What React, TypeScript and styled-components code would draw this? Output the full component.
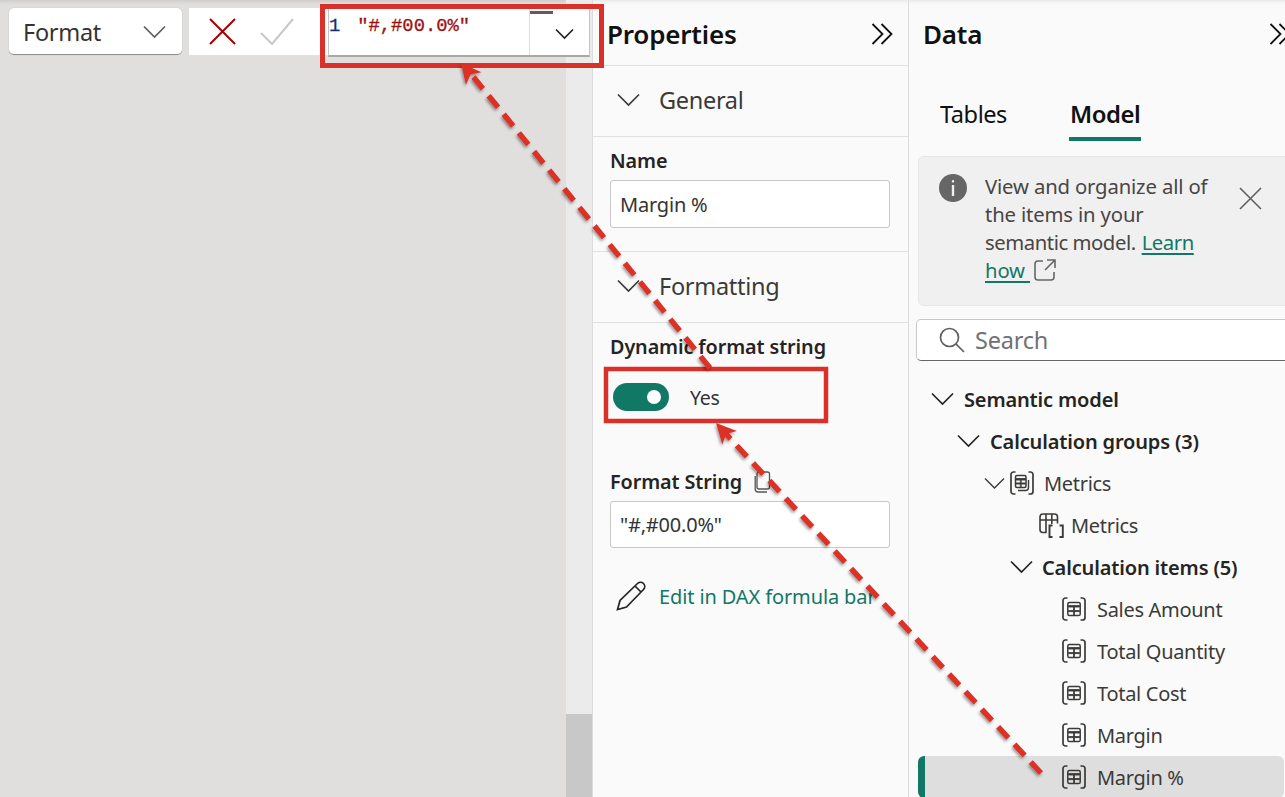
import React from "react";
import styled, { createGlobalStyle } from "styled-components";

const Global = createGlobalStyle`
  html, body { margin: 0; padding: 0; height: 797px; overflow: hidden; background: #fafafa; }
  body { font-family: "Noto Sans", "Open Sans", Arial, sans-serif; }
  * { box-sizing: border-box; }
`;

const TEAL = "#117865";

const Page = styled.div`
  position: relative;
  width: 1285px;
  height: 797px;
  display: flex;
  overflow: hidden;
  color: #252423;
`;

/* ---------- left canvas ---------- */
const LeftArea = styled.div`
  width: 592px;
  flex: none;
  display: grid;
  grid-template-columns: 566px 26px;
  grid-template-rows: 1fr;
`;
const Canvas = styled.div`
  grid-column: 1;
  grid-row: 1;
  background: #e0dfdd;
  box-shadow: inset 0 5px 4px -4px rgba(0, 0, 0, 0.12);
`;
const ScrollTrack = styled.div`
  grid-column: 2;
  grid-row: 1;
  background: #ebebeb;
  display: flex;
  flex-direction: column;
  justify-content: flex-end;
`;
const ScrollThumb = styled.div`
  height: 83px;
  background: #c8c8c8;
`;
const FormulaBar = styled.div`
  grid-column: 1 / 3;
  grid-row: 1;
  align-self: start;
  display: flex;
  align-items: flex-start;
  padding: 8px 2px 0 9px;
  z-index: 1;
`;
const MeasureSelect = styled.div`
  width: 173px;
  height: 47px;
  background: #fff;
  border-radius: 5px;
  border-bottom: 1px solid #8f8f8f;
  box-shadow: 0 0 1px rgba(0, 0, 0, 0.25);
  display: flex;
  align-items: center;
  justify-content: space-between;
  padding: 2px 16px 0 14px;
  font-size: 23.5px;
  letter-spacing: -0.3px;
  color: #333;
`;
const CommitBox = styled.div`
  width: 139px;
  height: 47px;
  margin-left: 7px;
  background: #fff;
  display: flex;
  align-items: center;
  gap: 24px;
  padding-left: 20px;
`;
const Editor = styled.div`
  flex: 1;
  height: 49px;
  background: #fff;
  border-left: 1px solid #c4c4c4;
  border-right: 1px solid #c4c4c4;
  border-bottom: 2px solid #a8a8a8;
  display: flex;
`;
const CodeLine = styled.div`
  flex: 1;
  display: flex;
  gap: 17px;
  padding: 6px 0 0 0;
  font-family: "Liberation Mono", monospace;
  font-size: 18.8px;
  line-height: 24px;
  -webkit-text-stroke: 0.3px currentColor;
`;
const LineNumber = styled.span`
  color: #14306f;
`;
const CodeString = styled.span`
  color: #9c1212;
`;
const EditorToggle = styled.div`
  width: 60px;
  border-left: 1px solid #dcdcdc;
  display: flex;
  flex-direction: column;
  align-items: flex-start;
`;
const Grip = styled.div`
  width: 23px;
  height: 3px;
  margin-top: 3px;
  background: #605e5c;
`;
const ToggleChevron = styled.div`
  margin: 14px 0 0 25px;
  display: flex;
`;

/* ---------- panels ---------- */
const PropertiesPanel = styled.aside`
  width: 317px;
  flex: none;
  background: #fafafa;
  border-left: 1px solid #dcdcdc;
  border-right: 1px solid #dcdcdc;
  box-shadow: inset 0 5px 4px -4px rgba(0, 0, 0, 0.1);
  display: flex;
  flex-direction: column;
`;
const DataPanel = styled.aside`
  flex: 1;
  min-width: 0;
  background: #fafafa;
  box-shadow: inset 0 5px 4px -4px rgba(0, 0, 0, 0.1);
  display: flex;
  flex-direction: column;
  overflow: hidden;
`;
const PanelHeader = styled.header<{ $left: number; $border?: boolean }>`
  height: 66px;
  flex: none;
  display: flex;
  align-items: center;
  justify-content: space-between;
  padding: 2px 13px 0 ${(p) => p.$left}px;
  border-bottom: ${(p) => (p.$border ? "1px solid #e1e1e1" : "none")};
`;
const PanelTitle = styled.h2`
  margin: 0;
  font-size: 26px;
  font-weight: 600;
  letter-spacing: -0.2px;
  color: #111;
`;
const CollapseData = styled.span`
  margin-right: -21px;
  display: flex;
`;
const SectionHead = styled.div`
  height: 71px;
  flex: none;
  display: flex;
  align-items: center;
  gap: 19px;
  padding: 0 0 2px 24px;
  border-bottom: 1px solid #e1e1e1;
  font-size: 23.5px;
  letter-spacing: -0.3px;
  color: #3b3a39;
`;
const SectionBody = styled.div<{ $height: number; $border?: boolean }>`
  height: ${(p) => p.$height}px;
  flex: none;
  padding: 12px 18px 0 17px;
  display: flex;
  flex-direction: column;
  border-bottom: ${(p) => (p.$border ? "1px solid #e1e1e1" : "none")};
`;
const FieldLabel = styled.div`
  font-size: 19.8px;
  font-weight: 600;
  line-height: 24px;
  letter-spacing: -0.1px;
  color: #252423;
  display: flex;
  align-items: center;
  gap: 11px;
`;
const TextInput = styled.div<{ $height: number }>`
  height: ${(p) => p.$height}px;
  margin-top: 7px;
  background: #fff;
  border: 1px solid #c8c8c8;
  border-radius: 3px;
  display: flex;
  align-items: center;
  padding: ${(p) => (p.$height % 2 === 0 ? 1 : 0)}px 0 0 9px;
  font-size: 20px;
  letter-spacing: -0.2px;
  color: #333;
`;
const ToggleRow = styled.div`
  display: flex;
  align-items: center;
  gap: 21px;
  margin: 24px 0 0 3px;
  font-size: 19.5px;
  letter-spacing: -0.3px;
  color: #333;
`;
const Toggle = styled.div`
  width: 56px;
  height: 28px;
  border-radius: 14px;
  background: ${TEAL};
  display: flex;
  align-items: center;
  justify-content: flex-end;
  padding-right: 8px;
`;
const Knob = styled.div`
  width: 14px;
  height: 14px;
  border-radius: 50%;
  background: #fff;
`;
const LabelSpaced = styled(FieldLabel)`
  margin-top: 59px;
`;
const EditRow = styled.div`
  display: flex;
  align-items: center;
  gap: 13px;
  margin: 33px 0 0 6px;
  width: 266px;
  overflow: hidden;
  white-space: nowrap;
  font-size: 20px;
  letter-spacing: -0.12px;
  color: ${TEAL};
`;

/* ---------- data panel ---------- */
const Tabs = styled.div`
  height: 75px;
  flex: none;
  display: flex;
  gap: 62px;
  padding: 28px 0 0 31px;
`;
const Tab = styled.div<{ $active?: boolean }>`
  height: 47px;
  font-size: ${(p) => (p.$active ? 23.9 : 23.6)}px;
  line-height: 40px;
  letter-spacing: -0.45px;
  padding: 0 ${(p) => (p.$active ? 1 : 0)}px;
  font-weight: ${(p) => (p.$active ? 600 : 400)};
  color: #111;
  border-bottom: ${(p) => (p.$active ? `4px solid ${TEAL}` : "none")};
`;
const InfoBox = styled.div`
  height: 150px;
  margin: 15px -20px 0 9px;
  flex: none;
  background: #f0f0f0;
  border: 1px solid #e6e6e6;
  border-radius: 6px;
  display: flex;
  padding: 15px 0 0 20px;
  color: #484644;
`;
const InfoIcon = styled.div`
  width: 28px;
  height: 28px;
  margin-top: 2px;
  flex: none;
  border-radius: 50%;
  background: #666;
  color: #f0f0f0;
  display: flex;
  align-items: center;
  justify-content: center;
`;
const InfoText = styled.div`
  width: 236px;
  margin-left: 18px;
  font-size: 20.3px;
  line-height: 28px;
  letter-spacing: -0.15px;
  flex: none;
`;
const InfoLine = styled.div<{ $tight?: boolean }>`
  white-space: nowrap;
  height: 28px;
  display: flex;
  align-items: center;
  gap: 6px;
  letter-spacing: ${(p) => (p.$tight ? "-0.45px" : "inherit")};
`;
const InfoLink = styled.span`
  color: ${TEAL};
  text-decoration: underline;
  text-underline-offset: 3px;
`;
const HowLink = styled(InfoLink)`
  white-space: pre;
`;
const LinkIcon = styled.span`
  display: inline-flex;
  margin-left: -2px;
`;
const InfoClose = styled.div`
  margin: 15px 0 0 18px;
  display: flex;
  flex: none;
`;
const SearchBox = styled.div`
  height: 42px;
  margin: 13px -20px 0 7px;
  flex: none;
  background: #fff;
  border: 1px solid #c8c8c8;
  border-bottom-color: #666;
  border-radius: 5px;
  display: flex;
  align-items: center;
  gap: 10px;
  padding-left: 22px;
  font-size: 23.5px;
  letter-spacing: -0.2px;
  color: #717171;
`;
const Tree = styled.div`
  margin-top: 17px;
  display: flex;
  flex-direction: column;
`;
const Row = styled.div<{ $indent: number; $bold?: boolean; $selected?: boolean }>`
  height: 42px;
  margin: 0 1px 0 9px;
  padding-left: ${(p) => p.$indent}px;
  display: flex;
  align-items: center;
  flex: none;
  white-space: nowrap;
  font-size: 20px;
  letter-spacing: ${(p) => (p.$bold ? "-0.15px" : "-0.3px")};
  font-weight: ${(p) => (p.$bold ? 600 : 400)};
  color: ${(p) => (p.$bold ? "#252423" : "#3b3a39")};
  background: ${(p) => (p.$selected ? "#dedede" : "transparent")};
  border-radius: ${(p) => (p.$selected ? "6px" : "0")};
  border-left: ${(p) => (p.$selected ? `7px solid ${TEAL}` : "none")};
`;
const Slot = styled.span<{ $w: number }>`
  width: ${(p) => p.$w}px;
  flex: none;
  display: flex;
  align-items: center;
`;

/* ---------- overlay ---------- */
const Annotations = styled.svg`
  position: absolute;
  inset: 0;
  width: 1285px;
  height: 797px;
  pointer-events: none;
  z-index: 5;
`;

/* ---------- icons ---------- */
const Chevron = ({ w = 22, color = "#3b3a39", sw = 1.7 }: { w?: number; color?: string; sw?: number }) => (
  <svg width={w} height={w / 2 + 2} viewBox={`0 0 ${w} ${w / 2 + 2}`} fill="none">
    <path d={`M1 1.5 L${w / 2} ${w / 2 + 0.5} L${w - 1} 1.5`} stroke={color} strokeWidth={sw} />
  </svg>
);
const DoubleChevron = () => (
  <svg width="24" height="24" viewBox="0 0 24 24" fill="none" stroke="#111" strokeWidth="1.8">
    <path d="M1.5 2 L11.5 12 L1.5 22" />
    <path d="M10.5 2 L20.5 12 L10.5 22" />
  </svg>
);
const CalcIcon = ({ shadow }: { shadow?: boolean }) => (
  <svg width="24" height="24" viewBox="0 0 24 24" fill="none" stroke="#3b3a39" strokeWidth="1.7">
    <path d="M5.5 1 H3.5 A2.5 2.5 0 0 0 1 3.5 V20.5 A2.5 2.5 0 0 0 3.5 23 H5.5" />
    <path d="M18.5 1 H20.5 A2.5 2.5 0 0 1 23 3.5 V20.5 A2.5 2.5 0 0 1 20.5 23 H18.5" />
    {shadow ? (
      <>
        <rect x="5.5" y="4.5" width="10.5" height="12" rx="1.5" strokeWidth="1.5" />
        <path d="M6 7.5 H15.5 V9 H6 Z M6 12 H15.5 V13 H6 Z M10.3 8 V16 M11.2 8 V16" fill="#3b3a39" strokeWidth="0.9" />
        <path d="M18.5 9 V16.5 A3 3 0 0 1 15.5 19.5 H8" strokeWidth="1.4" />
      </>
    ) : (
      <>
        <rect x="5.8" y="5.5" width="12.4" height="13" rx="1.6" strokeWidth="1.5" />
        <path d="M6.5 8.6 H17.5 V10 H6.5 Z M6.5 13.6 H17.5 V14.6 H6.5 Z M11.5 10 V18 M12.5 10 V18" fill="#3b3a39" strokeWidth="0.9" />
      </>
    )}
  </svg>
);
const TableBraceIcon = () => (
  <svg width="25" height="25" viewBox="0 0 25 25" fill="none" stroke="#3b3a39" strokeWidth="1.6">
    <path d="M7.5 19.5 H4 A3 3 0 0 1 1 16.5 V4 A3 3 0 0 1 4 1 H15.5 A3 3 0 0 1 18.5 4 V10.5" />
    <path d="M1 7 H18.5 M7 1 V19.5 M12.8 1 V11" />
    <path d="M13.5 12.5 H10.5 V24 H13.5 M20.5 12.5 H23.8 V24 H20.5" strokeWidth="1.9" />
  </svg>
);

const leaves = ["Sales Amount", "Total Quantity", "Total Cost", "Margin"];

const Head = ({ x1, y1, x2, y2 }: { x1: number; y1: number; x2: number; y2: number }) => {
  const a = Math.atan2(y2 - y1, x2 - x1);
  const pt = (d: number, o: number) => {
    const x = x2 - Math.cos(a) * d - Math.sin(a) * o;
    const y = y2 - Math.sin(a) * d + Math.cos(a) * o;
    return `${x.toFixed(1)},${y.toFixed(1)}`;
  };
  return <polygon points={`${x2},${y2} ${pt(20, 10)} ${pt(15, 0)} ${pt(20, -10)}`} fill="#dc3027" />;
};

export default function App() {
  return (
    <Page>
      <Global />
      <LeftArea>
        <Canvas />
        <ScrollTrack>
          <ScrollThumb />
        </ScrollTrack>
        <FormulaBar>
          <MeasureSelect>
            Format
            <Chevron w={23} color="#605e5c" />
          </MeasureSelect>
          <CommitBox>
            <svg width="27" height="27" viewBox="0 0 27 27" fill="none" stroke="#a80000" strokeWidth="2">
              <path d="M1 1 L26 26 M26 1 L1 26" />
            </svg>
            <svg width="34" height="27" viewBox="0 0 34 27" fill="none" stroke="#c8c8c8" strokeWidth="2">
              <path d="M1 15 L12 26 L33 1" />
            </svg>
          </CommitBox>
          <Editor>
            <CodeLine>
              <LineNumber>1</LineNumber>
              <CodeString>"#,#00.0%"</CodeString>
            </CodeLine>
            <EditorToggle>
              <Grip />
              <ToggleChevron>
                <Chevron w={19} color="#252423" />
              </ToggleChevron>
            </EditorToggle>
          </Editor>
        </FormulaBar>
      </LeftArea>

      <PropertiesPanel>
        <PanelHeader $left={14} $border>
          <PanelTitle>Properties</PanelTitle>
          <DoubleChevron />
        </PanelHeader>
        <SectionHead>
          <Chevron w={23} />
          General
        </SectionHead>
        <SectionBody $height={115} $border>
          <FieldLabel>Name</FieldLabel>
          <TextInput $height={48}>Margin %</TextInput>
        </SectionBody>
        <SectionHead>
          <Chevron w={23} />
          Formatting
        </SectionHead>
        <SectionBody $height={300}>
          <FieldLabel>Dynamic format string</FieldLabel>
          <ToggleRow>
            <Toggle>
              <Knob />
            </Toggle>
            Yes
          </ToggleRow>
          <LabelSpaced>
            Format String
            <svg width="18" height="22" viewBox="0 0 18 22" fill="none" stroke="#555" strokeWidth="1.3">
              <rect x="4" y="1" width="12.5" height="17" rx="2" />
              <path d="M2.2 5 V18 A3 3 0 0 0 5.2 21 H14" />
            </svg>
          </LabelSpaced>
          <TextInput $height={47}>"#,#00.0%"</TextInput>
          <EditRow>
            <svg width="30" height="30" viewBox="0 0 30 30" fill="none" stroke="#252423" strokeWidth="1.7">
              <path d="M1.5 28.5 L4 19.5 L21.5 2.5 A3.6 3.6 0 0 1 27.5 8.5 L10.5 26 Z" />
              <path d="M19 5 L25 11" />
            </svg>
            Edit in DAX formula bar
          </EditRow>
        </SectionBody>
      </PropertiesPanel>

      <DataPanel>
        <PanelHeader $left={14}>
          <PanelTitle>Data</PanelTitle>
          <CollapseData>
            <DoubleChevron />
          </CollapseData>
        </PanelHeader>
        <Tabs>
          <Tab>Tables</Tab>
          <Tab $active>Model</Tab>
        </Tabs>
        <InfoBox>
          <InfoIcon>
            <svg width="4" height="16" viewBox="0 0 4 16" fill="currentColor">
              <rect x="0.8" y="0" width="2.4" height="2.6" rx="1.2" />
              <rect x="0.8" y="5" width="2.4" height="11" />
            </svg>
          </InfoIcon>
          <InfoText>
            <InfoLine>View and organize all of</InfoLine>
            <InfoLine>the items in your</InfoLine>
            <InfoLine $tight>
              semantic model. <InfoLink>Learn</InfoLink>
            </InfoLine>
            <InfoLine>
              <HowLink>how </HowLink>
              <LinkIcon>
                <svg width="22" height="22" viewBox="0 0 22 22" fill="none" stroke="#666" strokeWidth="1.6">
                  <path d="M9 2 H4 A3 3 0 0 0 1 5 V18 A3 3 0 0 0 4 21 H17 A3 3 0 0 0 20 18 V13" />
                  <path d="M13 1 H21 V9 M21 1 L11 11" />
                </svg>
              </LinkIcon>
            </InfoLine>
          </InfoText>
          <InfoClose>
            <svg width="23" height="23" viewBox="0 0 23 23" fill="none" stroke="#605e5c" strokeWidth="1.6">
              <path d="M1 1 L22 22 M22 1 L1 22" />
            </svg>
          </InfoClose>
        </InfoBox>
        <SearchBox>
          <svg width="26" height="26" viewBox="0 0 26 26" fill="none" stroke="#605e5c" strokeWidth="1.7">
            <circle cx="10.5" cy="10.5" r="9" />
            <path d="M17 17 L25 25" />
          </svg>
          Search
        </SearchBox>
        <Tree>
          <Row $indent={13} $bold>
            <Slot $w={33}>
              <Chevron w={23} color="#252423" />
            </Slot>
            Semantic model
          </Row>
          <Row $indent={39} $bold>
            <Slot $w={33}>
              <Chevron w={23} color="#252423" />
            </Slot>
            Calculation groups (3)
          </Row>
          <Row $indent={66}>
            <Slot $w={26}>
              <Chevron w={21} color="#3b3a39" sw={1.4} />
            </Slot>
            <Slot $w={34}>
              <CalcIcon shadow />
            </Slot>
            Metrics
          </Row>
          <Row $indent={121}>
            <Slot $w={32}>
              <TableBraceIcon />
            </Slot>
            Metrics
          </Row>
          <Row $indent={92} $bold>
            <Slot $w={32}>
              <Chevron w={23} color="#252423" />
            </Slot>
            Calculation items (5)
          </Row>
          {leaves.map((l) => (
            <Row key={l} $indent={144}>
              <Slot $w={35}>
                <CalcIcon />
              </Slot>
              {l}
            </Row>
          ))}
          <Row $indent={137} $selected>
            <Slot $w={35}>
              <CalcIcon />
            </Slot>
            Margin %
          </Row>
        </Tree>
      </DataPanel>

      <Annotations viewBox="0 0 1285 797">
        <defs>
          <filter id="sh" x="-5%" y="-5%" width="110%" height="110%">
            <feDropShadow dx="-1" dy="2" stdDeviation="1.6" floodColor="#000" floodOpacity="0.4" />
          </filter>
        </defs>
        <rect x="322.5" y="6.5" width="279" height="59" fill="none" stroke="#d9302a" strokeWidth="5" />
        <rect x="606" y="369" width="220" height="52" fill="none" stroke="#d9302a" strokeWidth="4.5" />
        <g filter="url(#sh)">
          <line x1="1041" y1="773" x2="726" y2="434" stroke="#dc3027" strokeWidth="5.5" strokeDasharray="15 9" />
          <Head x1={1041} y1={773} x2={716} y2={423} />
          <line x1="710" y1="368" x2="471" y2="74" stroke="#dc3027" strokeWidth="5.5" strokeDasharray="15 9" />
          <Head x1={710} y1={368} x2={461} y2={63} />
        </g>
      </Annotations>
    </Page>
  );
}
